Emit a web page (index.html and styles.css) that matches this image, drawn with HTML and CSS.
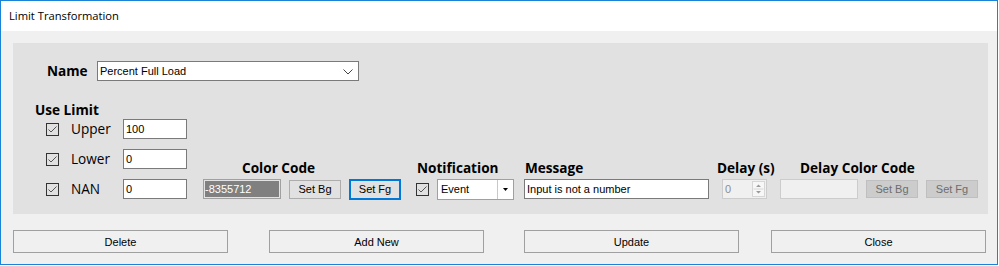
FILE: index.html
```html
<!DOCTYPE html>
<html lang="en">
  <head>
    <meta charset="UTF-8" />
    <title>Limit Transformation</title>
    <link rel="stylesheet" href="styles.css">
  </head>
  <body>
    <div class="window">
      <div class="titlebar">Limit Transformation</div>
      <div class="content">
        <div class="panel">
          <div class="name-row">
            <span class="lbl-bold name-lbl">Name</span>
            <div class="select">
              <span>Percent Full Load</span>
              <svg class="chevron" width="10" height="6" viewBox="0 0 10 6"><path d="M0.5 0.5 L5 5 L9.5 0.5" fill="none" stroke="#444" stroke-width="1"/></svg>
            </div>
          </div>

          <div class="limits-area">
            <div class="limits">
              <div class="lbl-bold">Use Limit</div>
              <div class="limit-row">
                <span class="check"><svg width="11" height="11" viewBox="0 0 11 11"><path d="M1.5 5.5 L4 8 L9.5 2.5" fill="none" stroke="#555" stroke-width="1"/></svg></span>
                <span class="lbl">Upper</span>
                <div class="field limit-field">100</div>
              </div>
              <div class="limit-row">
                <span class="check"><svg width="11" height="11" viewBox="0 0 11 11"><path d="M1.5 5.5 L4 8 L9.5 2.5" fill="none" stroke="#555" stroke-width="1"/></svg></span>
                <span class="lbl">Lower</span>
                <div class="field limit-field">0</div>
              </div>
              <div class="limit-row">
                <span class="check"><svg width="11" height="11" viewBox="0 0 11 11"><path d="M1.5 5.5 L4 8 L9.5 2.5" fill="none" stroke="#555" stroke-width="1"/></svg></span>
                <span class="lbl">NAN</span>
                <div class="field limit-field">0</div>
              </div>
            </div>

            <div class="group color-group">
              <div class="lbl-bold group-head">Color Code</div>
              <div class="ctrls">
                <div class="field color-field">-8355712</div>
                <div class="btn small-btn">Set Bg</div>
                <div class="btn small-btn focused">Set Fg</div>
              </div>
            </div>

            <div class="group notif-group">
              <div class="lbl-bold group-head">Notification</div>
              <div class="ctrls">
                <span class="check"><svg width="11" height="11" viewBox="0 0 11 11"><path d="M1.5 5.5 L4 8 L9.5 2.5" fill="none" stroke="#555" stroke-width="1"/></svg></span>
                <div class="combo">
                  <span class="combo-text">Event</span>
                  <span class="combo-btn"><svg width="5" height="3" viewBox="0 0 5 3"><path d="M0 0 H5 L2.5 3 Z" fill="#000"/></svg></span>
                </div>
              </div>
            </div>

            <div class="group msg-group">
              <div class="lbl-bold group-head">Message</div>
              <div class="ctrls">
                <div class="field msg-field">Input is not a number</div>
              </div>
            </div>

            <div class="group delay-group">
              <div class="lbl-bold group-head">Delay (s)</div>
              <div class="ctrls">
                <div class="spinner">
                  <span class="spin-text">0</span>
                  <span class="spin-btns">
                    <svg width="11" height="14" viewBox="0 0 11 14"><path d="M3 5 H8 L5.5 2.5 Z M3 9 H8 L5.5 11.5 Z" fill="#9a9a9a"/><path d="M0.5 7 H10.5" stroke="#d6d6d6"/></svg>
                  </span>
                </div>
              </div>
            </div>

            <div class="group dcolor-group">
              <div class="lbl-bold group-head">Delay Color Code</div>
              <div class="ctrls">
                <div class="field disabled-field dcolor-field"></div>
                <div class="btn small-btn disabled">Set Bg</div>
                <div class="btn small-btn disabled">Set Fg</div>
              </div>
            </div>
          </div>
        </div>

        <div class="actions">
          <div class="btn action-btn">Delete</div>
          <div class="btn action-btn add-btn">Add New</div>
          <div class="btn action-btn update-btn">Update</div>
          <div class="btn action-btn close-btn">Close</div>
        </div>
      </div>
    </div>
  </body>
</html>
```

FILE: styles.css
```css
html,
body {
  margin: 0;
  padding: 0;
  background: #ffffff;
}
.window {
  width: 998px;
  height: 265px;
  box-sizing: border-box;
  border: 1px solid #1883d7;
  background: #f0f0f0;
  font-family: "Liberation Sans", Arial, sans-serif;
  font-size: 11px;
  color: #000;
}
.titlebar {
  height: 30px;
  line-height: 30px;
  padding-left: 8px;
  background: #ffffff;
  font-family: "Open Sans", sans-serif;
  font-size: 11.2px;
  color: #000;
}
.content {
  padding: 12px 9px 0 12px;
}
.panel {
  width: 975px;
  box-sizing: border-box;
  background: #e1e1e1;
  padding: 18px 0 15px 0;
}
.lbl-bold {
  font-family: "Open Sans", sans-serif;
  font-weight: bold;
  font-size: 13.6px;
  line-height: 16px;
  white-space: nowrap;
}
.lbl {
  font-family: "Open Sans", sans-serif;
  font-size: 13.6px;
  line-height: 16px;
}
/* name */
.name-row {
  display: flex;
  align-items: center;
  padding-left: 34px;
}
.name-lbl {
  width: 50px;
}
.select {
  width: 262px;
  height: 20px;
  box-sizing: border-box;
  border: 1px solid #7a7a7a;
  background: #fff;
  display: flex;
  align-items: center;
  justify-content: space-between;
  padding: 0 5px 0 2px;
}
.chevron {
  margin-top: 1px;
}
/* limits */
.limits-area {
  display: flex;
  align-items: flex-end;
  margin-top: 21px;
}
.limits {
  padding-left: 22px;
}
.limit-row {
  display: flex;
  align-items: center;
  height: 20px;
  margin-top: 10px;
  padding-left: 11px;
}
.limit-row:nth-child(2) {
  margin-top: 1px;
}
.limit-row .lbl {
  width: 52px;
  margin-left: 12px;
}
.check {
  width: 13px;
  height: 13px;
  box-sizing: border-box;
  border: 1px solid #333;
  display: flex;
  align-items: center;
  justify-content: center;
  flex-shrink: 0;
}
.field {
  height: 20px;
  box-sizing: border-box;
  border: 1px solid #7a7a7a;
  background: #fff;
  line-height: 18px;
  padding-left: 2px;
  white-space: nowrap;
  overflow: hidden;
}
.limit-field {
  width: 64px;
}
/* groups */
.group-head {
  margin-bottom: 3px;
}
.ctrls {
  display: flex;
  align-items: center;
  height: 20px;
}
.btn {
  box-sizing: border-box;
  border: 1px solid #adadad;
  background: #e1e1e1;
  display: flex;
  align-items: center;
  justify-content: center;
  white-space: nowrap;
}
.small-btn {
  width: 52px;
  height: 19px;
  margin-left: 8px;
}
.focused {
  border: 2px solid #0078d7;
  height: 21px;
}
.disabled {
  background: #cccccc;
  border-color: #bfbfbf;
  color: #6d6d6d;
  height: 18px;
}
.color-group {
  margin-left: 16px;
}
.color-group .group-head {
  margin-left: 39px;
}
.color-field {
  width: 78px;
  background: #808080;
  color: #fff;
  border: 1px solid #a0a0a0;
  box-shadow: inset 0 0 0 1px #e3e3e3;
  padding-left: 1px;
}
.notif-group {
  margin-left: 15px;
}
.notif-group .group-head {
  margin-left: 1px;
}
.combo {
  width: 77px;
  height: 21px;
  margin-left: 8px;
  box-sizing: border-box;
  border: 1px solid #a0a0a0;
  background: #fff;
  display: flex;
}
.combo-text {
  flex: 1;
  line-height: 19px;
  padding-left: 3px;
}
.combo-btn {
  width: 15px;
  border-left: 1px solid #c8c8c8;
  background: #fff;
  display: flex;
  align-items: center;
  justify-content: center;
}
.msg-group {
  margin-left: 10px;
}
.msg-group .group-head {
  margin-left: 1px;
}
.msg-field {
  width: 185px;
  color: #000;
}
.delay-group {
  width: 45px;
  margin-left: 13px;
}
.delay-group .group-head {
  margin-left: -5px;
}
.spinner {
  width: 45px;
  height: 20px;
  box-sizing: border-box;
  border: 1px solid #cccccc;
  background: #f0f0f0;
  display: flex;
  align-items: center;
  justify-content: space-between;
}
.spin-text {
  color: #8d8d8d;
  padding-left: 2px;
}
.spin-btns {
  display: flex;
  margin-right: 1px;
  border: 1px solid #d6d6d6;
  background: #f7f7f7;
}
.dcolor-group {
  margin-left: 13px;
}
.dcolor-group .group-head {
  margin-left: 20px;
}
.dcolor-field {
  width: 78px;
}
.disabled-field {
  border-color: #cccccc;
  background: #f0f0f0;
}
/* bottom buttons */
.actions {
  display: flex;
  margin-top: 16px;
}
.action-btn {
  width: 215px;
  height: 23px;
  background: #f0f0f0;
  border-color: #a0a0a0;
}
.add-btn {
  margin-left: 41px;
}
.update-btn {
  margin-left: 40px;
}
.close-btn {
  margin-left: 32px;
}
```
